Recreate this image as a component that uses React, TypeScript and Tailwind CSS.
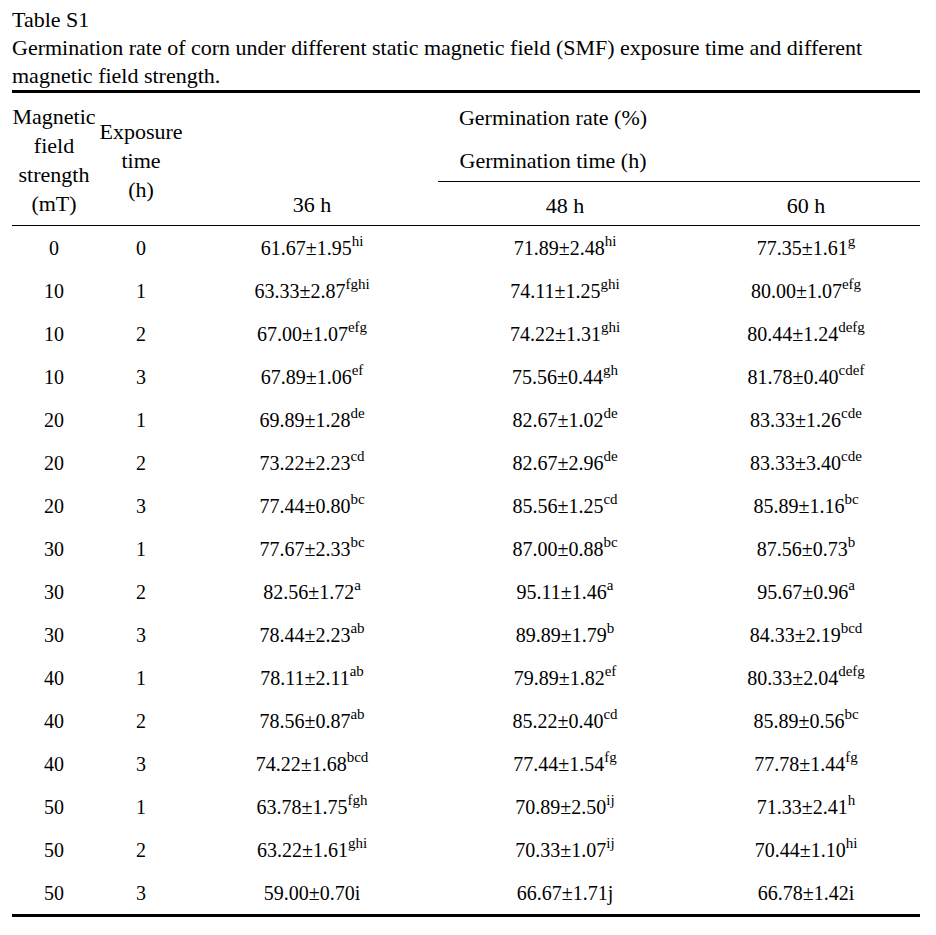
import React from 'react';

type Cell = [string, string];

const rows: { mt: string; h: string; cells: Cell[] }[] = [
  { mt: '0', h: '0', cells: [['61.67±1.95', 'hi'], ['71.89±2.48', 'hi'], ['77.35±1.61', 'g']] },
  { mt: '10', h: '1', cells: [['63.33±2.87', 'fghi'], ['74.11±1.25', 'ghi'], ['80.00±1.07', 'efg']] },
  { mt: '10', h: '2', cells: [['67.00±1.07', 'efg'], ['74.22±1.31', 'ghi'], ['80.44±1.24', 'defg']] },
  { mt: '10', h: '3', cells: [['67.89±1.06', 'ef'], ['75.56±0.44', 'gh'], ['81.78±0.40', 'cdef']] },
  { mt: '20', h: '1', cells: [['69.89±1.28', 'de'], ['82.67±1.02', 'de'], ['83.33±1.26', 'cde']] },
  { mt: '20', h: '2', cells: [['73.22±2.23', 'cd'], ['82.67±2.96', 'de'], ['83.33±3.40', 'cde']] },
  { mt: '20', h: '3', cells: [['77.44±0.80', 'bc'], ['85.56±1.25', 'cd'], ['85.89±1.16', 'bc']] },
  { mt: '30', h: '1', cells: [['77.67±2.33', 'bc'], ['87.00±0.88', 'bc'], ['87.56±0.73', 'b']] },
  { mt: '30', h: '2', cells: [['82.56±1.72', 'a'], ['95.11±1.46', 'a'], ['95.67±0.96', 'a']] },
  { mt: '30', h: '3', cells: [['78.44±2.23', 'ab'], ['89.89±1.79', 'b'], ['84.33±2.19', 'bcd']] },
  { mt: '40', h: '1', cells: [['78.11±2.11', 'ab'], ['79.89±1.82', 'ef'], ['80.33±2.04', 'defg']] },
  { mt: '40', h: '2', cells: [['78.56±0.87', 'ab'], ['85.22±0.40', 'cd'], ['85.89±0.56', 'bc']] },
  { mt: '40', h: '3', cells: [['74.22±1.68', 'bcd'], ['77.44±1.54', 'fg'], ['77.78±1.44', 'fg']] },
  { mt: '50', h: '1', cells: [['63.78±1.75', 'fgh'], ['70.89±2.50', 'ij'], ['71.33±2.41', 'h']] },
  { mt: '50', h: '2', cells: [['63.22±1.61', 'ghi'], ['70.33±1.07', 'ij'], ['70.44±1.10', 'hi']] },
  // last row has the letters set inline, not raised
  { mt: '50', h: '3', cells: [['59.00±0.70i', ''], ['66.67±1.71j', ''], ['66.78±1.42i', '']] },
];

const cols = 'grid grid-cols-[84px_90px_252px_254px_228px]';

export default function App() {
  return (
    <div className="min-h-screen bg-white text-black font-['Liberation_Serif','Times_New_Roman',serif]">
      <div className="w-[908px] ml-[12px] pt-[6px]">
        {/* Caption */}
        <div className="text-[22px] leading-[28px]">
          <p>Table S1</p>
          <p>
            Germination rate of corn under different static magnetic field (SMF) exposure time and different
            <br />
            magnetic field strength.
          </p>
        </div>

        {/* Table */}
        <div className="border-t-[3px] border-b-[3px] border-black">
          <div className={`${cols} grid-rows-[47px_41px_44px] text-[22px] leading-[29px] border-b border-black`}>
            <div className="row-span-3 flex flex-col items-center justify-center pt-[2px] text-center">
              <span>Magnetic</span>
              <span>field</span>
              <span>strength</span>
              <span>(mT)</span>
            </div>
            <div className="row-span-3 flex flex-col items-center justify-center pt-[2px] text-center">
              <span>Exposure</span>
              <span>time</span>
              <span>(h)</span>
            </div>
            <div className="col-span-3 flex items-end justify-center pb-[8px]">Germination rate (%)</div>
            <div className="col-span-3 flex items-center justify-center">Germination time (h)</div>
            <div className="flex items-center justify-center pt-[3px]">36 h</div>
            <div className="flex items-center justify-center pt-[3px] border-t border-black">48 h</div>
            <div className="flex items-center justify-center pt-[3px] border-t border-black">60 h</div>
          </div>

          {rows.map((r, i) => (
            <div key={i} className={`${cols} h-[43px] items-center text-[20px] leading-none text-center`}>
              <span>{r.mt}</span>
              <span>{r.h}</span>
              {r.cells.map(([v, sup], j) => (
                <span key={j}>
                  {v}
                  {sup && <sup className="text-[15px] -top-[0.55em]">{sup}</sup>}
                </span>
              ))}
            </div>
          ))}
        </div>
      </div>
    </div>
  );
}
